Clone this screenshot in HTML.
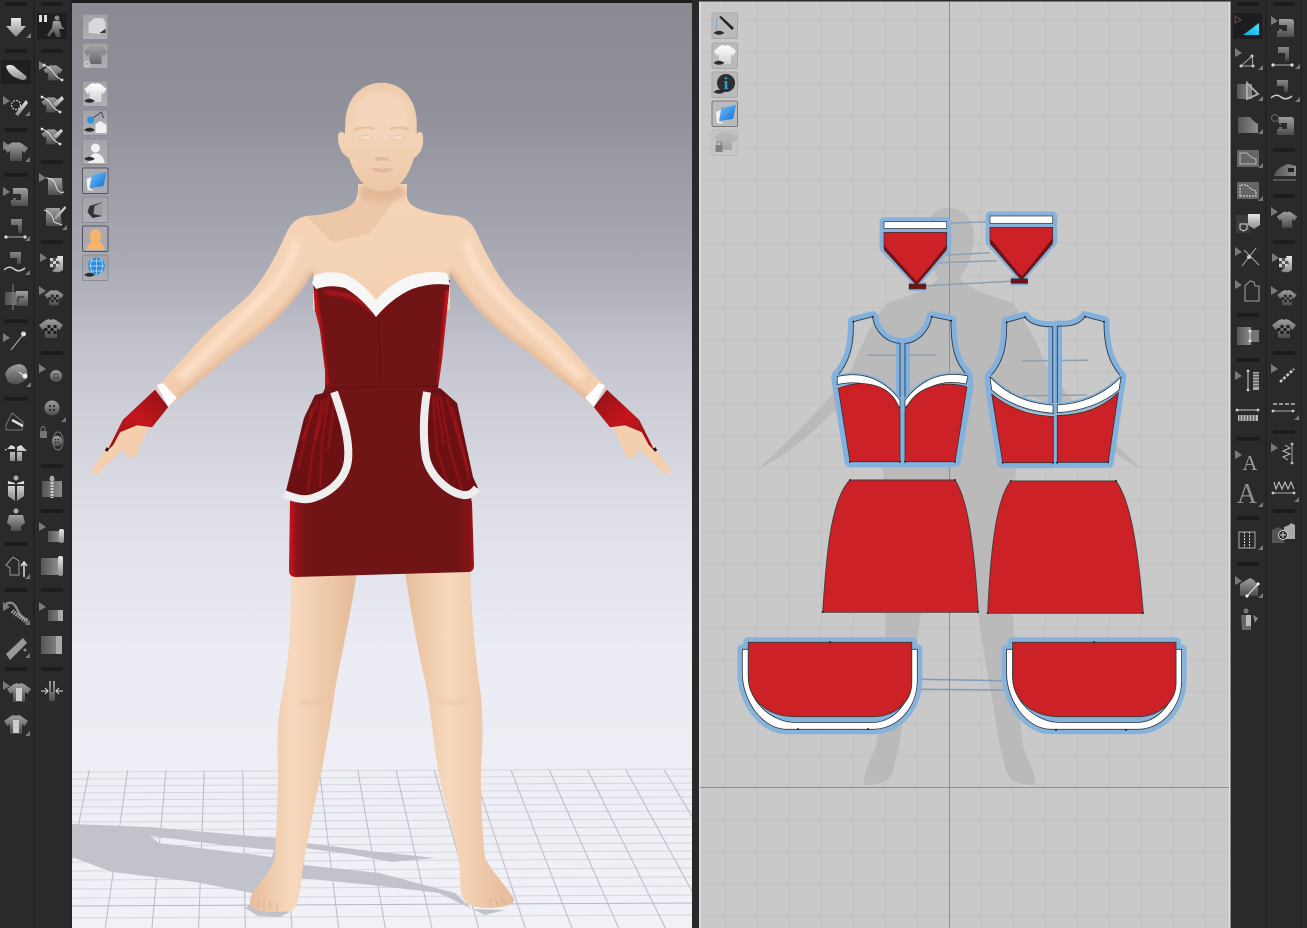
<!DOCTYPE html>
<html><head><meta charset="utf-8"><title>Garment editor</title>
<style>html,body{margin:0;padding:0;background:#2a2a2c;width:1307px;height:928px;overflow:hidden}svg{display:block}</style></head>
<body>
<svg xmlns="http://www.w3.org/2000/svg" width="1307" height="928" viewBox="0 0 1307 928">
<defs>
<linearGradient id="bg3d" x1="0" y1="0" x2="0" y2="928" gradientUnits="userSpaceOnUse">
<stop offset="0" stop-color="#898a92"/><stop offset=".11" stop-color="#8f9099"/><stop offset=".28" stop-color="#a9aab4"/><stop offset=".39" stop-color="#c5c6cf"/><stop offset=".54" stop-color="#dcdde5"/><stop offset=".7" stop-color="#ebebf3"/><stop offset="1" stop-color="#f1f1f8"/></linearGradient>
<linearGradient id="g" x1="0" y1="0" x2="0" y2="1"><stop offset="0" stop-color="#a0a0a0"/><stop offset="1" stop-color="#4c4c4c"/></linearGradient>
<linearGradient id="gh" x1="0" y1="0" x2="1" y2="0"><stop offset="0" stop-color="#555"/><stop offset="1" stop-color="#8c8c8c"/></linearGradient>
<linearGradient id="gw" x1="0" y1="0" x2="0" y2="1"><stop offset="0" stop-color="#e8e8e8"/><stop offset="1" stop-color="#8a8a8a"/></linearGradient>
<linearGradient id="gl" x1="0" y1="0" x2="0" y2="1"><stop offset="0" stop-color="#ffffff"/><stop offset="1" stop-color="#d2d2d2"/></linearGradient>
<linearGradient id="btn" x1="0" y1="0" x2="0" y2="1"><stop offset="0" stop-color="#a2a2a8"/><stop offset="1" stop-color="#aeaeb6"/></linearGradient>
<linearGradient id="cy" x1="0" y1="1" x2="1" y2="0"><stop offset="0" stop-color="#0aa8e0"/><stop offset="1" stop-color="#3fe8ff"/></linearGradient>
<linearGradient id="bl" x1="0" y1="0" x2="1" y2="1"><stop offset="0" stop-color="#74c4f4"/><stop offset="1" stop-color="#0c6cd8"/></linearGradient>
<linearGradient id="skinV" x1="0" y1="0" x2="1" y2="0"><stop offset="0" stop-color="#e6bd9b"/><stop offset=".4" stop-color="#f8d9bd"/><stop offset="1" stop-color="#e4ba98"/></linearGradient>
<linearGradient id="skinB" x1="0" y1="0" x2="0" y2="1"><stop offset="0" stop-color="#f6d5b8"/><stop offset="1" stop-color="#f2cdad"/></linearGradient>
<linearGradient id="head" x1="0" y1="0" x2="0" y2="1"><stop offset="0" stop-color="#edcaab"/><stop offset=".5" stop-color="#f3d3b6"/><stop offset="1" stop-color="#edc8a8"/></linearGradient>
<linearGradient id="dress" x1="0" y1="0" x2="1" y2="0"><stop offset="0" stop-color="#c9171d"/><stop offset=".04" stop-color="#8e1417"/><stop offset=".1" stop-color="#711416"/><stop offset=".92" stop-color="#701416"/><stop offset=".98" stop-color="#8c1316"/><stop offset="1" stop-color="#a81318"/></linearGradient>
<linearGradient id="glove" x1="1" y1="0" x2="0" y2="1"><stop offset="0" stop-color="#8f1216"/><stop offset=".5" stop-color="#c4161c"/><stop offset="1" stop-color="#8f1115"/></linearGradient>
<filter id="b1" x="-20%" y="-20%" width="140%" height="140%"><feGaussianBlur stdDeviation=".8"/></filter>
<filter id="b15" x="-30%" y="-10%" width="160%" height="120%"><feGaussianBlur stdDeviation="1.600"/></filter>
<filter id="b2" x="-30%" y="-30%" width="160%" height="160%"><feGaussianBlur stdDeviation="3"/></filter>
<clipPath id="c3"><rect x="72" y="0" width="620" height="928"/></clipPath>
<clipPath id="c2"><rect x="700" y="2" width="529" height="926"/></clipPath>
<clipPath id="cbody"><path d="M358 184C358 194 358 200 350 206C340 212 322 215 307 216C296 218 290 224 285 236C275 258 262 282 247 297C230 313 212 325 197 343L156 388 170 406C190 388 212 372 232 354C252 340 272 325 288 306C297 296 306 284 313 272L313 310H450V272C457 284 466 296 475 306C491 325 511 340 531 354C551 372 573 388 593 406L606 388 566 343C551 325 533 313 516 297C501 282 488 258 478 236C473 224 467 218 456 216C441 215 423 212 413 206C405 200 407 194 407 184Z"/></clipPath>
<clipPath id="cdress"><path d="M313 280L345 281 376 308 412 282 450 280 447 310 442 360 438 388 460 440 472 503 474 565Q474 572 468 572L296 577Q289 577 289 570L290 500 303 440 325 388 325 370 320 330 315 310Z"/></clipPath>

<path id="pFL" d="M853.300 321.700L872.700 316.700C874 330 886 343 900 343.300V461.700H850L838.300 388 836.700 376.700C850 362 854 345 853.300 321.700Z"/>
<path id="pFR" d="M905 343.300C918 343 930 330 931.700 316.700L951 320.700C951 345 954 362 967 375L968 387 955 461.700H905Z"/>
<path id="pBL" d="M1006.700 322.300L1025 317.300C1030 324 1040 327 1052.700 326.700V462.700H1002.700L991.700 394 990 376.700C1004 362 1007 345 1006.700 322.300Z"/>
<path id="pBR" d="M1057.300 326C1070 327 1080 324 1085 316.700L1104 321.700C1104 345 1108 362 1121 376.700L1118.300 392.700 1108.300 462.300H1057.300Z"/>
<mask id="mh" maskUnits="userSpaceOnUse" x="700" y="200" width="530" height="300">
<rect x="700" y="200" width="530" height="300" fill="#fff"/>
<g fill="#000"><use href="#pFL"/><use href="#pFR"/><use href="#pBL"/><use href="#pBR"/></g>
</mask>

<path id="tee" d="M-5-9-1.500-10Q0-8 1.500-10L5-9 12-4 8.500 1 6-1V9H-6V-1L-8.500 1-12-4Z" fill="url(#g)"/>
<path id="teeL" d="M-5-9-1.500-10Q0-8 1.500-10L5-9 11-4 8 1 6-1V9H-6V-1L-8 1-11-4Z" fill="url(#gl)"/>
<g id="teeC"><use href="#tee"/><path d="M-3-4h3v3h-3zM3-4h3v3h-3zM0-1h3v3h-3zM-6-1h3v3h-3zM-3 2h3v3h-3zM3 2h3v3h-3z" fill="#1c1c1c" transform="translate(-.5 0)"/></g>
<path id="mk" d="M0 0V9L7 5Z" fill="#7a7a80"/>
<path id="cr" d="M0 5H5V0Z" fill="#77777c"/>
<path id="sew" d="M-7-9H5Q8-9 8-6V9H-9V3H-7V1H-4V3H1V-3H-7Z" fill="url(#g)"/>
<g id="sewL"><path d="M-5-11H6V3H2V-5H-5Z" fill="url(#g)" opacity=".8"/><path d="M-10 7H9" stroke="#aaa" stroke-width="1"/><circle cx="-10" cy="7" r="1.600" fill="#ddd"/><circle cx="9" cy="7" r="1.600" fill="#ddd"/></g>
<g id="sewW"><path d="M-5-11H6V1H2V-5H-5Z" fill="url(#g)" opacity=".8"/><path d="M-11 7Q-6 2-1 6T10 5" stroke="#ccc" stroke-width="1.500" fill="none"/></g>
<g id="roll"><rect x="-11" y="-8" width="17" height="17" fill="url(#gh)"/><rect x="6" y="-10" width="5" height="20" rx="2" fill="url(#gw)"/></g>
<g id="rollS"><rect x="-7" y="-4" width="11" height="11" fill="url(#gh)"/><rect x="4" y="-6" width="5" height="14" rx="2" fill="url(#gw)"/></g>
<g id="flat"><rect x="-11" y="-9" width="21" height="18" fill="url(#gh)"/><rect x="4" y="-9" width="6" height="18" fill="#aaa"/></g>
<g id="flatS"><rect x="-7" y="-5" width="15" height="11" fill="url(#gh)"/><rect x="3" y="-5" width="5" height="11" fill="#aaa"/></g>
<g id="curve"><use href="#tee" transform="scale(.8)"/><path d="M-9-8Q-3-6 0-1T9 7" stroke="#ddd" stroke-width="1" fill="none"/><circle cx="-9" cy="-8" r="1.400" fill="#ddd"/><circle cx="9" cy="7" r="1.400" fill="#ddd"/></g>
<g id="btnI"><circle r="7.500" fill="url(#g)"/><g fill="#222"><circle cx="-2" cy="-2" r="1"/><circle cx="2" cy="-2" r="1"/><circle cx="-2" cy="2" r="1"/><circle cx="2" cy="2" r="1"/></g></g>
<path id="sep" d="M-11-1H11M-11 1H11" stroke="#0e0e0e" stroke-width="1"/>
<path id="eye" d="M-5.500 0Q0-4.500 5.500 0Q0 3.500-5.500 0Z" fill="#2c2c2c"/>
<rect id="bt" x="0" y="0" width="25.500" height="25.500" rx="1.500" fill="url(#btn)" stroke="#8b8b90"/>
<rect id="bs" x="0" y="0" width="25.500" height="25.500" rx="1.500" fill="#a9a9b1" stroke="#56565a" stroke-width="1"/>
<rect id="b2d" x="0" y="0" width="25.500" height="25.500" rx="1.500" fill="#bababa" stroke="#a8a8a8"/>
</defs>

<!-- base -->
<rect width="1307" height="928" fill="#29292b"/>
<!-- 3D view -->
<rect x="72" y="3" width="620" height="925" fill="url(#bg3d)"/>
<g clip-path="url(#c3)">
<g stroke="#d5d6df" stroke-width="1">
<path d="M72 772L692 769M72 779L692 776M72 786L692 783M72 793L692 790M72 800L692 797M72 807L692 804M72 814L692 811M72 822L692 819M72 830L692 827M72 838L692 835M72 846L692 843M72 854L692 851M72 862L692 859M72 871L692 868M72 880L692 877M72 889L692 886M72 898L692 895M72 918L692 915"/>
</g>
<path d="M72 906L692 903" stroke="#b5b6c0"/>
<g stroke="#babbc5" stroke-width="1" fill="none">
<path d="M89.300 770L58.600 928M127.700 770L105.300 928M166 770L152 928M204.300 770L198.600 928M242.700 770L245.300 928M281 770L292 928M319.300 770L338.600 928M357.700 770L385.300 928M396 770L432 928M434.300 770L478.600 928M472.700 770L525.300 928M511 770L572 928M549.300 770L618.600 928M587.700 770L665.300 928M626 770L712 928M664.300 770L758.600 928"/>
</g>
<path fill-rule="evenodd" fill="#c2c3ca" d="M72 824L149 827 275 838 305 843 370 851 435 858 392 862 355 855 305 848 304 865 379 873 455 893 472 909 505 910 485 915 470 908 439 893 372 885 299 878 285 885 252 893 195 882 112 872 72 857ZM150 836L159 843 272 857 274 850 222 845 160 837Z"/>
<path fill="#c2c3ca" d="M245 908L252 904 290 912 280 917 258 916Z"/>
</g>

<!-- Figure -->
<g>
<!-- Legs -->
<path fill="url(#skinV)" d="M291 570C291 620 290 660 282 695C277 720 277 745 278 770C278 800 276 835 275 858C272 870 260 882 252 894C248 902 250 908 256 910C266 912 285 913 293 910C299 905 300 890 302 875C304 860 312 815 322 770C326 745 332 715 335 690C340 660 352 610 357 570Z"/>
<path fill="url(#skinV)" d="M405 570C410 610 420 660 427 690C431 715 434 745 438 770C446 810 456 840 459 862C461 875 458 890 464 900C470 908 482 908 492 908C500 907 514 906 514 900C510 890 494 875 485 858C482 830 481 800 481 770C483 745 483 720 481 695C476 665 472 620 470 570Z"/>
<path d="M300 700Q312 708 326 698M436 698Q450 708 468 700" stroke="#e5bb98" stroke-width="5" fill="none" filter="url(#b2)" opacity=".45"/>
<path d="M258 907v-8M264 909v-9M270 910v-9M277 911v-8M498 906l-3-8M505 904l-5-8M491 907l-1-8" stroke="#d7ab88" stroke-width=".8" fill="none"/>
<!-- Torso + arms -->
<path fill="url(#skinB)" d="M358 184C358 194 358 200 350 206C340 212 322 215 307 216C296 218 290 224 285 236C275 258 262 282 247 297C230 313 212 325 197 343L156 388 170 406C190 388 212 372 232 354C252 340 272 325 288 306C297 296 306 284 313 272L313 310H450V272C457 284 466 296 475 306C491 325 511 340 531 354C551 372 573 388 593 406L606 388 566 343C551 325 533 313 516 297C501 282 488 258 478 236C473 224 467 218 456 216C441 215 423 212 413 206C405 200 407 194 407 184Z"/>
<g clip-path="url(#cbody)">
<path d="M170 406C190 388 212 372 232 354C252 340 272 325 288 306C297 296 306 284 313 272M593 406C573 388 551 372 531 354C511 340 491 325 475 306C466 296 457 284 450 272" stroke="#e2b795" stroke-width="7" fill="none" filter="url(#b2)"/>
<path d="M180 378Q230 330 262 298T296 240M583 378Q533 330 501 298T467 240" stroke="#fbe0c7" stroke-width="9" fill="none" filter="url(#b2)"/>
<path fill="#edc8a8" d="M307 217L333 242 340 241 370 233 383 217 400 192 365 195 343 210Z"/>
<ellipse cx="382" cy="192" rx="24" ry="10" fill="#e3b998" filter="url(#b2)"/>
</g>
<!-- hands -->
<g id="armL">
<path fill="#f4cfae" stroke="#f4cfae" stroke-linejoin="round" d="M113 440L91 471 97 474 123 448 128 457 135 457 148 427 130 422Z"/>
<path fill="url(#glove)" stroke="#a01216" stroke-width=".5" stroke-linejoin="round" d="M155 390L168 407 152 427 137 425 120 432 113 445 108 450 123 420Z"/>
<path fill="#fdfdfd" d="M157 385L163 383 177 398 168 407Z"/>
<path d="M108 448l-2 3" stroke="#2a1414" stroke-width="3"/>
</g>
<use href="#armL" transform="translate(762 0) scale(-1 1)"/>
<!-- Head -->
<path fill="url(#head)" d="M381.700 82.700C362 82.700 347 97 345.500 120L345 134C342 131 338 131 338 137C338 145 341 154 349 158C353 172 361 183 369 188C376 192 388 192 395 188C403 183 410 172 414 158C421 154 424 145 423 137C423 131 419 131 416.700 134L416.700 120C415 97 401 82.700 381.700 82.700Z"/>
<ellipse cx="381" cy="115" rx="28" ry="24" fill="#f5d6ba" filter="url(#b2)"/>
<path d="M359 138q7-5 14 0q-7 4-14 0zM391 138q7-5 14 0q-7 4-14 0z" fill="#f4dcc6" stroke="#c7a98e" stroke-width=".6" stroke-dasharray="1 1"/>
<path d="M376 157q-2 3 1 4 5-1 10 0 3-1 1-4" fill="#ddb293" stroke="none" opacity=".7"/>
<path d="M371 169q6-2 11 0q6-2 12 0q-12 7-23 0z" fill="#e2b798"/>
<path d="M354 130q10-5 20-1M390 129q10-4 19 1" stroke="#e0b997" stroke-width="2" fill="none" filter="url(#b1)"/>

<!-- Dress -->
<path fill="url(#dress)" d="M313 280L345 281 376 308 412 282 450 280 447 310 442 360 438 388 460 440 472 503 474 565Q474 572 468 572L296 577Q289 577 289 570L290 500 303 440 325 388 325 370 320 330 315 310Z"/>
<g clip-path="url(#cdress)">
<path d="M314 290L318 320 326 385M448 290L445 330 440 385" stroke="#c9171d" stroke-width="5" fill="none" filter="url(#b15)"/>
<path d="M325 292Q360 295 372 312" stroke="#b0151a" stroke-width="4" fill="none" filter="url(#b15)"/>
<path d="M292 505V572" stroke="#d0181e" stroke-width="5" fill="none" filter="url(#b15)"/>
</g>
<path d="M378 318L381 385M330 388L438 386" stroke="#5d0f11" stroke-width="1" fill="none"/>
<!-- peplum -->
<path fill="#6b1114" d="M335 390L315 395 304 418 285 495 303 503 313 502 337 487 348 460 347 437Z"/>
<path fill="#6b1114" d="M427 391L440 388 457 403 473 477 478 488 463 498 440 483 425 457 424 437Z"/>
<g stroke="#b8161b" fill="none" stroke-width="1.500" filter="url(#b1)" opacity=".75">
<path d="M312 408L298 470M322 400L312 455 308 492M329 396L322 440 320 488M334 402L328 450M318 400L302 440M326 398L316 440"/>
<path d="M440 396L450 450 462 490M433 396L437 450 448 482M447 398L462 450 470 482M452 406L468 470M436 396L444 445"/>
</g>
<g stroke="#eeeeee" fill="none" stroke-width="8" stroke-linejoin="round">
<path d="M334 392C343 418 350 440 348 460C346 478 332 492 313 498C304 501 294 498 284 494"/>
<path d="M427 392C423 415 423 440 426 458C430 475 447 492 463 495C470 496 474 492 477 488"/>
</g>
<!-- neckline -->
<path fill="#f7f7f7" d="M312 283L315 275Q330 270 345 274 362 282 376 300 392 282 412 275 432 270 447 273L450 285Q432 282 412 289 392 298 376 317 362 298 345 288 330 284 316 289Z"/>
</g>

<!-- 3D view buttons -->
<g transform="translate(82.500 14)"><use href="#bt"/>
<path d="M6 19V9L12 4H20L23 8V15L17 20Z" fill="#d8d8d8"/><path d="M6 19H17L23 15V19H6Z" fill="#333"/></g>
<g transform="translate(82.500 43)"><use href="#bt"/><use href="#tee" x="13" y="12" opacity=".7"/><circle cx="5" cy="21" r="2.500" fill="none" stroke="#ddd"/></g>
<g transform="translate(82.500 81)"><use href="#bt"/><use href="#teeL" x="13" y="12"/><use href="#eye" x="7" y="20"/></g>
<g transform="translate(82.500 110)"><use href="#bt"/><path d="M9 9L19 2 21 8" stroke="#444" fill="none"/><circle cx="8" cy="10" r="3.500" fill="#2796e0"/><path d="M13 23V14L18 11 24 15V23Z" fill="#f0f0f0"/><use href="#eye" x="7" y="20"/></g>
<g transform="translate(82.500 139)"><use href="#bt"/><circle cx="13" cy="9" r="4.500" fill="#f2f2f2"/><path d="M6 24Q7 15 13 14 21 15 22 24Z" fill="#f0f0f0"/><use href="#eye" x="7" y="20"/></g>
<g transform="translate(82.500 168)"><use href="#bs"/><path d="M9 7L24 4 21 18 7 20Z" fill="url(#bl)"/><path d="M4 11L9 9 7 20 12 23 5 22Z" fill="#f2f2f2"/></g>
<g transform="translate(82.500 197)"><use href="#bt"/><path d="M7 9L20 5 20 19 10 21 5 15Z" fill="#333"/><path d="M12 9L20 5 20 19 11 17Z" fill="#9c9c9c"/></g>
<g transform="translate(82.500 226)"><use href="#bs"/><ellipse cx="13" cy="10" rx="5.500" ry="7" fill="#f6b36d"/><path d="M4 24Q5 17 10 15H16Q21 17 22 24Z" fill="#f6b36d"/></g>
<g transform="translate(82.500 255)"><use href="#bt"/><circle cx="14" cy="11" r="8.500" fill="#2a8ddf"/><path d="M6 11H22M14 3V19M8 6H20M8 16H20M10 3Q6 11 10 19M18 3Q22 11 18 19" stroke="#c4dcf3" stroke-width=".7" fill="none"/><use href="#eye" x="7" y="20"/></g>

<!-- 2D view -->
<rect x="699" y="1.500" width="531" height="926.500" fill="#c9c9c9"/>
<rect x="699" y="1.500" width="2" height="926.500" fill="#dadada"/>
<rect x="1229" y="1.500" width="1.500" height="926.500" fill="#e2e2e2"/>
<g clip-path="url(#c2)">
<g stroke="#c1c1c1" stroke-width="1"><path d="M725.500 0V928M757.500 0V928M789.500 0V928M821.500 0V928M853.500 0V928M885.500 0V928M917.500 0V928M981.500 0V928M1013.500 0V928M1045.500 0V928M1077.500 0V928M1109.500 0V928M1141.500 0V928M1173.500 0V928M1205.500 0V928"/>
<path d="M700 19.500H1230M700 51.500H1230M700 83.500H1230M700 115.500H1230M700 147.500H1230M700 179.500H1230M700 211.500H1230M700 243.500H1230M700 275.500H1230M700 307.500H1230M700 339.500H1230M700 371.500H1230M700 403.500H1230M700 435.500H1230M700 467.500H1230M700 499.500H1230M700 531.500H1230M700 563.500H1230M700 595.500H1230M700 627.500H1230M700 659.500H1230M700 691.500H1230M700 723.500H1230M700 755.500H1230M700 819.500H1230M700 851.500H1230M700 883.500H1230M700 915.500H1230"/></g>
<!-- silhouette -->
<path fill="#bababa" d="M949 208C934 208 925 220 925 238C926 258 934 270 938 278C930 290 905 297 887 303C872 320 862 345 850 372C830 400 790 440 757 470C795 450 815 430 832 413L870 395C878 400 878 420 880 450C885 480 889 530 887 600C885 660 882 700 876 747C868 765 863 775 864 785C878 785 890 783 893 770L899 747C905 700 918 650 922 600C928 550 940 520 950 500C960 520 972 550 977 600C982 650 993 700 1000 747L1006 770C1010 783 1022 785 1035 785C1036 775 1030 765 1023 747C1018 700 1015 660 1012 600C1010 530 1014 480 1019 450C1022 420 1020 400 1029 395L1067 413C1084 430 1105 450 1143 470C1110 440 1070 400 1050 372C1038 345 1028 325 1013 303C995 297 968 290 960 278C965 270 973 258 974 238C974 220 964 208 949 208Z"/>
<path d="M949.500 0V928" stroke="#8f8f8f"/>
<path d="M700 787.500H1230" stroke="#8f8f8f"/>
<!-- links -->
<g stroke="#8fa0b1" stroke-width="1.500" fill="none">
<path d="M946.700 223.300L990 221.700M946.700 255L990 252.700M938 262.700L996.700 260.700M926 285.700L1011 281.300"/>
<path d="M868 355.300L936 355M1021.700 361L1088.300 360.300M1023 395.700L1087 395"/>
<path d="M917.300 679.300L1006 680.700M917.300 689.300L1006 690" stroke="#7f9cba"/>
</g>

<!-- collar halos -->
<g fill="none" stroke="#86b2dc" stroke-width="9" stroke-linejoin="round">
<path d="M884 221.700H946.700V228.400H884Z"/><path d="M884 232.300H946.700V248L916.700 281.700 884 248Z"/><path d="M909 286.500H926"/>
<path d="M990 216H1052.700V223.300H990Z"/><path d="M990 227.300H1052.700V241.700L1021.700 276.700 990 241.700Z"/><path d="M1011 281H1027.700"/>
</g>
<rect x="884" y="221.700" width="62.700" height="6.700" fill="#fff" stroke="#333" stroke-width=".7"/>
<rect x="990" y="216" width="62.700" height="7.300" fill="#fff" stroke="#333" stroke-width=".7"/>
<path d="M884 232.300H946.700V248L916.700 281.700 884 248Z" fill="#cc2127" stroke="#333" stroke-width=".7"/>
<path d="M884 245L916.700 281.700 946.700 245V250L918 284H915L884 250Z" fill="#6d1618"/>
<rect x="909" y="284" width="17" height="5" fill="#6d1618" stroke="#333" stroke-width=".5"/>
<path d="M990 227.300H1052.700V241.700L1021.700 276.700 990 241.700Z" fill="#cc2127" stroke="#333" stroke-width=".7"/>
<path d="M990 238L1021.700 276.700 1052.700 238V244L1023 279H1020L990 244Z" fill="#6d1618"/>
<rect x="1011" y="278.700" width="16.700" height="4.700" fill="#6d1618" stroke="#333" stroke-width=".5"/>

<!-- bodice halos -->
<g mask="url(#mh)" fill="none" stroke="#82b1de" stroke-width="11" stroke-linejoin="round">
<use href="#pFL"/><use href="#pFR"/><use href="#pBL"/><use href="#pBR"/>
</g>
<rect x="896" y="343" width="14" height="65" fill="#82b1de"/>
<rect x="1048" y="326" width="14" height="80" fill="#82b1de"/>
<!-- bodice front -->
<g fill="none" stroke="#2d3b4b" stroke-width=".9">
<path d="M853.300 321.700L872.700 316.700C874 330 886 343 900 343.300V408M853.300 321.700C854 345 850 362 836.700 376.700"/>
<path d="M905 343.300C918 343 930 330 931.700 316.700L951 320.700C951 345 954 362 967 375M905 343.300V408"/>
</g>
<path d="M837.300 376.500Q875 368 900 400V408Q875 376 837.300 384.500Z" fill="#fff" stroke="#82b1de" stroke-width="4"/>
<path d="M905 400Q930 368 968 376L966 384Q930 376 905 408Z" fill="#fff" stroke="#82b1de" stroke-width="4"/>
<path d="M837.300 376.500Q875 368 900 400V408Q875 376 837.300 384.500Z" fill="#fff" stroke="#333" stroke-width=".8"/>
<path d="M905 400Q930 368 968 376L966 384Q930 376 905 408Z" fill="#fff" stroke="#333" stroke-width=".8"/>
<path d="M838.300 388.300C865 378 893 385 900 410.700V461.700H850Z" fill="#cc2127" stroke="#333" stroke-width=".8"/>
<path d="M905 410.700C915 385 945 380 967 387L955 461.700H905Z" fill="#cc2127" stroke="#333" stroke-width=".8"/>

<!-- bodice back -->
<g fill="none" stroke="#2d3b4b" stroke-width=".9">
<path d="M1006.700 322.300L1025 317.300C1030 324 1040 327 1052.700 326.700V404M1006.700 322.300C1007 345 1004 362 990 376.700"/>
<path d="M1057.300 326C1070 327 1080 324 1085 316.700L1104 321.700C1104 345 1108 362 1121 376.700M1057.300 326V404"/>
</g>
<path d="M990 377Q1015 403 1053 405V413.300Q1015 410 991.700 390Z" fill="#fff" stroke="#82b1de" stroke-width="4"/>
<path d="M1121 377Q1095 403 1057.300 405V412.700Q1095 410 1119 390Z" fill="#fff" stroke="#82b1de" stroke-width="4"/>
<path d="M990 377Q1015 403 1053 405V413.300Q1015 410 991.700 390Z" fill="#fff" stroke="#333" stroke-width=".8"/>
<path d="M1121 377Q1095 403 1057.300 405V412.700Q1095 410 1119 390Z" fill="#fff" stroke="#333" stroke-width=".8"/>
<path d="M991.700 394Q1017 415 1053.300 416.500V462.700H1002.700Z" fill="#cc2127" stroke="#333" stroke-width=".8"/>
<path d="M1057.300 415.500Q1095 415 1118.300 392.700L1108.300 462.300H1057.300Z" fill="#cc2127" stroke="#333" stroke-width=".8"/>

<!-- skirts -->
<path d="M850 480H955C967 498 974 540 978.300 612.300H822.700C826 560 830 500 850 480Z" fill="#cc2127" stroke="#4a3a3a" stroke-width=".9"/>
<path d="M1010.700 481H1116C1130 500 1138 545 1143.300 613.300H987.700C990 560 995 500 1010.700 481Z" fill="#cc2127" stroke="#4a3a3a" stroke-width=".9"/>

<!-- pockets -->
<g id="pk">
<path d="M748.300 642.300H911.700V649.300H917.300V680C917.300 708 897 729.300 873.300 729.300H786.700C762 729.300 742.300 700 742.300 673.300V649.300H748.300Z" fill="#86b2dc" stroke="#86b2dc" stroke-width="10" stroke-linejoin="round"/>
<path d="M742.300 649.300H748.300V676.700C748.300 700 770 722 795 722.500H873C895 722 911 700 911.700 680V649.300H917.300V680C917.300 708 897 729.300 873.300 729.300H786.700C762 729.300 742.300 700 742.300 673.300Z" fill="#fff" stroke="#2b3642" stroke-width=".8"/>
<path d="M748.300 642.300H911.700V683.300C911.700 703 893 716.700 873.300 716.700H795C768 716.700 748.300 700 748.300 676.700Z" fill="#cc2127" stroke="#3a3a3a" stroke-width=".9"/>
</g>
<use href="#pk" x="264.300"/>

<!-- vertices -->
<g fill="#222">
<circle cx="850" cy="480" r="1"/><circle cx="955" cy="480" r="1"/><circle cx="822.700" cy="612" r="1"/><circle cx="978" cy="612" r="1"/>
<circle cx="1010.700" cy="481" r="1"/><circle cx="1116" cy="481" r="1"/><circle cx="987.700" cy="613" r="1"/><circle cx="1143" cy="613" r="1"/>
<circle cx="830" cy="642" r="1"/><circle cx="1094" cy="642" r="1"/><circle cx="798" cy="729" r="1"/><circle cx="868" cy="729" r="1"/><circle cx="1056" cy="730" r="1"/><circle cx="1126" cy="730" r="1"/>
<circle cx="853.300" cy="321.700" r="1"/><circle cx="872.700" cy="316.700" r="1"/><circle cx="931.700" cy="316.700" r="1"/><circle cx="951" cy="320.700" r="1"/><circle cx="1006.700" cy="322.300" r="1"/><circle cx="1025" cy="317.300" r="1"/><circle cx="1085" cy="316.700" r="1"/><circle cx="1104" cy="321.700" r="1"/>
<circle cx="850" cy="461.700" r="1"/><circle cx="900" cy="461.700" r="1"/><circle cx="905" cy="461.700" r="1"/><circle cx="955" cy="461.700" r="1"/><circle cx="1002.700" cy="462.700" r="1"/><circle cx="1053" cy="462.700" r="1"/><circle cx="1057" cy="462.700" r="1"/><circle cx="1108" cy="462.300" r="1"/>
</g>
</g>

<!-- 2D buttons -->
<g transform="translate(712 13)"><use href="#b2d"/><path d="M7 4L20 17 22 15 9 3Z" fill="#222"/><path d="M5 5 4 17" stroke="#7ea0c8" fill="none"/><use href="#eye" x="7" y="20"/></g>
<g transform="translate(712 43)"><use href="#b2d"/><use href="#teeL" x="13" y="12"/><use href="#eye" x="7" y="20"/></g>
<g transform="translate(712 72)"><use href="#b2d"/><circle cx="14" cy="11" r="9" fill="#2f2f33"/><text x="14" y="17" font-family="'Liberation Serif',serif" font-weight="bold" font-size="17" fill="#1fa6d8" text-anchor="middle">i</text><use href="#eye" x="7" y="20"/></g>
<g transform="translate(712 101)"><rect width="25.500" height="25.500" rx="1.500" fill="#bababa" stroke="#7a7a7a"/><path d="M9 7L24 4 21 18 7 20Z" fill="url(#bl)"/><path d="M4 11L9 9 7 20 12 23 5 22Z" fill="#f2f2f2"/></g>
<g transform="translate(712 130)"><rect width="25.500" height="25.500" rx="1.500" fill="#c6c6c6" stroke="#b9b9b9"/><use href="#tee" x="14" y="11" opacity=".25"/><rect x="3.500" y="15" width="7" height="7" fill="#808080"/><path d="M5 15v-3h4v3" stroke="#808080" fill="none"/></g>

<!-- Left toolbar -->
<rect x="0" y="0" width="72" height="928" fill="#2a2a2c"/>
<rect x="33.500" y="0" width="1" height="928" fill="#1c1c1e"/>
<rect x="69" y="0" width="3" height="928" fill="#262628"/>
<rect x="72" y="0" width="620" height="3" fill="#1e1e20"/>
<g>
<use href="#sep" x="16" y="4"/><use href="#sep" x="16" y="51"/><use href="#sep" x="16" y="130"/><use href="#sep" x="16" y="175"/><use href="#sep" x="16" y="321"/><use href="#sep" x="16" y="399"/><use href="#sep" x="16" y="544"/><use href="#sep" x="16" y="590"/><use href="#sep" x="16" y="669"/>
<use href="#sep" x="52" y="4"/><use href="#sep" x="52" y="51"/><use href="#sep" x="52" y="162"/><use href="#sep" x="52" y="242"/><use href="#sep" x="52" y="353"/><use href="#sep" x="52" y="466"/><use href="#sep" x="52" y="511"/><use href="#sep" x="52" y="590"/><use href="#sep" x="52" y="669"/>

<!-- col1 -->
<path d="M11 18H21V26H26L16 37 6 26H11Z" fill="url(#gw)"/><use href="#cr" x="26" y="33"/>
<rect x="1" y="60" width="30" height="24" rx="1" fill="#1f1f21"/>
<path d="M6 66Q12 63 16 68L26 76Q28 80 22 80L14 77Q7 72 6 66Z" fill="url(#gw)"/>
<use href="#mk" x="3" y="96"/><circle cx="16" cy="105" r="4.500" fill="none" stroke="#ddd" stroke-dasharray="2 1"/><path d="M15 114 26 100 28 103 18 116Z" fill="url(#gw)"/><use href="#cr" x="25" y="111"/>
<use href="#mk" x="3" y="141"/><use href="#tee" x="16" y="152"/><use href="#cr" x="25" y="157"/>
<use href="#mk" x="3" y="187"/><use href="#sew" x="20" y="197"/>
<use href="#sewL" x="16" y="230"/><use href="#cr" x="25" y="236"/>
<use href="#sewW" x="15" y="263"/><use href="#cr" x="25" y="270"/>
<path d="M13 284V310" stroke="#666" stroke-width="1.500"/><path d="M5 292H20V305H5Z" fill="url(#gh)" opacity=".9"/><path d="M16 291H28V306H16Z" fill="url(#g)"/><path d="M18 302V297H24" stroke="#222" fill="none"/>
<use href="#mk" x="3" y="333"/><path d="M11 350 22 336" stroke="#bbb"/><circle cx="23.500" cy="334" r="2.500" fill="#ddd"/>
<path d="M5 374Q8 365 20 364 29 366 27 378 18 388 8 382Z" fill="url(#g)"/><path d="M19 372 27 378" stroke="#eee" stroke-width="1"/><circle cx="25" cy="376" r="2.500" fill="#eee"/><use href="#cr" x="26" y="382"/>
<path d="M6 425 12 413 23 422 22 430H6Z" fill="none" stroke="#777"/><path d="M12 420 23 426" stroke="#ddd" stroke-width="2.500"/>
<path d="M5 451 11 445 15 447V449H5ZM17 447 21 445 27 451H17ZM10 452H15V461H10ZM17 452H22V461H17Z" fill="url(#gw)"/>
<path d="M8 481V496L15 501V483ZM24 481V496L17 501V483Z" fill="url(#gw)"/><circle cx="16" cy="478" r="2.500" fill="#aaa"/><path d="M7 485H25" stroke="#333" stroke-width="2"/>
<circle cx="16" cy="511" r="2.500" fill="#aaa"/><path d="M9 515H23L25 523 21 526V531H11V526L7 523Z" fill="url(#g)"/>
<path d="M6 565 13 557 19 561V575H10V568Z" fill="none" stroke="#999" stroke-width="1"/><path d="M24 577V563M21 566L24 562 27 566" stroke="#ddd" stroke-width="1.500" fill="none"/><use href="#cr" x="25" y="574"/>
<use href="#mk" x="3" y="602"/><path d="M6 604Q13 600 17 609T28 620" stroke="#888" stroke-width="2.500" fill="none"/><path d="M12 611 27 622" stroke="#aaa" stroke-width="4" stroke-dasharray="1.500 1"/><use href="#cr" x="25" y="620"/>
<path d="M6 654 23 638 27 643 10 660Z" fill="#999"/><circle cx="25" cy="650" r="1.500" fill="#888"/><use href="#cr" x="25" y="653"/>
<use href="#mk" x="3" y="681"/><use href="#tee" x="19" y="693"/><rect x="16" y="688" width="6" height="13" fill="#ccc"/>
<use href="#tee" x="16" y="725"/><rect x="13" y="720" width="6" height="13" fill="#ccc"/><use href="#cr" x="25" y="731"/>

<!-- col2 -->
<rect x="37" y="13" width="30" height="26" fill="#1f1f21"/>
<path d="M39 15h3v7h-3zM44 15h3v7h-3z" fill="#ddd"/><circle cx="57" cy="18" r="2.500" fill="#888"/><path d="M53 21H60L62 27 65 29 59 29 61 37H56L54 31 49 37 47 35 52 28Z" fill="url(#g)"/>
<use href="#mk" x="39" y="61"/><use href="#curve" x="53" y="73"/>
<use href="#curve" x="51" y="105"/><path d="M53 104 62 96 64 99 56 107Z" fill="url(#gw)"/>
<use href="#curve" x="51" y="137"/><path d="M53 136 61 129 63 131 56 139Z" fill="url(#gw)"/>
<use href="#mk" x="39" y="173"/><path d="M48 178H62L63 195H48Z" fill="url(#g)"/><path d="M46 178Q54 178 56 186T64 192" stroke="#ddd" fill="none"/>
<path d="M46 208H60L62 226H46Z" fill="url(#g)"/><path d="M44 210Q52 212 54 222L62 225" stroke="#ddd" fill="none"/><path d="M54 218 65 206 66 208 56 220Z" fill="url(#gw)"/><use href="#cr" x="62" y="225"/>
<use href="#mk" x="40" y="253"/><rect x="50" y="258" width="11" height="10" fill="#555"/><path d="M50 258h3v3h-3zM56 258h3v3h-3zM53 261h3v3h-3zM50 264h3v3h-3zM56 264h3v3h-3z" fill="#ccc"/><path d="M57 256H63V270Q58 274 52 271L60 264Z" fill="url(#gw)"/>
<use href="#mk" x="39" y="286"/><use href="#teeC" transform="translate(54 298) scale(.8)"/>
<use href="#teeC" transform="translate(51 329)"/>
<use href="#mk" x="39" y="364"/><use href="#btnI" transform="translate(56 376) scale(.8)"/>
<use href="#btnI" x="52" y="408"/><use href="#cr" x="61" y="417"/>
<rect x="40" y="431" width="7" height="7" rx="1" fill="#777"/><path d="M41 431v-3q2-3 4 0v3" stroke="#777" fill="none"/><use href="#btnI" transform="translate(57 441) scale(.7)"/><ellipse cx="58" cy="441" rx="5" ry="9" fill="none" stroke="#777"/>
<rect x="42" y="481" width="20" height="16" fill="url(#gh)"/><path d="M52 476V498" stroke="#ccc" stroke-width="3" stroke-dasharray="2 1"/><circle cx="52" cy="479" r="2.500" fill="#aaa"/>
<use href="#mk" x="39" y="522"/><use href="#rollS" x="55" y="535"/>
<use href="#roll" x="52" y="566"/>
<use href="#mk" x="39" y="602"/><use href="#flatS" x="55" y="615"/>
<use href="#flat" x="52" y="645"/>
<path d="M49 681V700Q52 703 55 700V681H53V692H51V681Z" fill="url(#g)"/><path d="M41 691H47M45 688 48 691 45 694M63 691H57M59 688 56 691 59 694" stroke="#ddd" fill="none"/>
</g>

<!-- Right toolbar -->
<rect x="1230.500" y="0" width="76.500" height="928" fill="#2a2a2c"/>
<rect x="1265.500" y="0" width="1" height="928" fill="#1c1c1e"/>
<rect x="1301" y="0" width="1" height="928" fill="#222224"/>
<g>
<use href="#sep" x="1248" y="4"/><use href="#sep" x="1248" y="315"/><use href="#sep" x="1248" y="360"/><use href="#sep" x="1248" y="439"/><use href="#sep" x="1248" y="518"/><use href="#sep" x="1248" y="564"/>
<use href="#sep" x="1284" y="4"/><use href="#sep" x="1284" y="150"/><use href="#sep" x="1284" y="196"/><use href="#sep" x="1284" y="242"/><use href="#sep" x="1284" y="353"/><use href="#sep" x="1284" y="432"/><use href="#sep" x="1284" y="511"/>

<rect x="1233" y="13" width="29" height="26" fill="#1d1d1f"/>
<path d="M1235 16V23L1241 20Z" fill="none" stroke="#6a4a55"/>
<path d="M1243 35H1259V23Z" fill="url(#cy)"/>
<use href="#mk" x="1235" y="48"/><path d="M1241 66H1253L1252 56Z" fill="none" stroke="#aaa"/><g fill="#ccc"><circle cx="1241" cy="66" r="1.500"/><circle cx="1253" cy="66" r="1.500"/><circle cx="1252" cy="56" r="1.500"/></g><use href="#cr" x="1258" y="65"/>
<rect x="1237" y="84" width="15" height="15" fill="url(#gh)"/><path d="M1247 83 1258 94 1247 99Z" fill="none" stroke="#aaa" stroke-width="2"/><use href="#cr" x="1258" y="96"/>
<path d="M1238 117H1250Q1254 122 1258 124V133H1238Z" fill="url(#gh)"/><use href="#cr" x="1258" y="129"/>
<rect x="1237" y="150" width="22" height="17" fill="#666"/><path d="M1240 164V153H1247Q1251 158 1256 159V164Z" fill="none" stroke="#bbb"/><use href="#cr" x="1258" y="163"/>
<rect x="1237" y="182" width="22" height="17" fill="#666"/><path d="M1240 196V185H1247Q1251 190 1256 191V196Z" fill="none" stroke="#ddd" stroke-dasharray="2 1"/><use href="#cr" x="1258" y="196"/>
<rect x="1236" y="215" width="14" height="18" fill="#3a3a3a"/><path d="M1248 214H1260V225L1254 229 1248 225Z" fill="url(#gw)"/><path d="M1240 224H1247V229L1243.500 231 1240 229Z" fill="none" stroke="#ddd"/>
<use href="#mk" x="1235" y="247"/><path d="M1242 266 1256 248M1244 250 1259 265" stroke="#aaa"/><circle cx="1249" cy="257" r="2" fill="#ccc"/>
<use href="#mk" x="1235" y="280"/><path d="M1245 301V286L1250 281 1254 282 1255 286H1259V301Z" fill="none" stroke="#888" stroke-width="1.300"/>
<rect x="1237" y="327" width="14" height="18" fill="url(#gh)"/><rect x="1251" y="330" width="8" height="12" fill="#777"/><path d="M1250 331V340" stroke="#ccc"/><circle cx="1250" cy="331" r="1.500" fill="#ddd"/><circle cx="1250" cy="341" r="1.500" fill="#ddd"/>
<use href="#mk" x="1235" y="371"/><path d="M1248 371V390" stroke="#ccc"/><circle cx="1248" cy="371" r="1.400" fill="#ccc"/><circle cx="1248" cy="390" r="1.400" fill="#ccc"/><rect x="1253" y="372" width="6" height="18" fill="#aaa"/><path d="M1253 374H1259M1253 377H1259M1253 380H1259M1253 383H1259M1253 386H1259" stroke="#333"/>
<path d="M1237 410H1258" stroke="#ccc"/><circle cx="1237" cy="410" r="1.400" fill="#ccc"/><circle cx="1258" cy="410" r="1.400" fill="#ccc"/><rect x="1238" y="415" width="20" height="6" fill="#bbb"/><path d="M1240 415V421M1243 415V421M1246 415V421M1249 415V421M1252 415V421M1255 415V421" stroke="#333"/>
<use href="#mk" x="1235" y="450"/><text x="1250" y="470" font-family="'Liberation Serif',serif" font-size="21" fill="#9a9a9a" text-anchor="middle">A</text>
<text x="1247" y="503" font-family="'Liberation Serif',serif" font-size="28" fill="#8e8e8e" text-anchor="middle">A</text><use href="#cr" x="1258" y="502"/>
<rect x="1239" y="532" width="16" height="16" fill="none" stroke="#aaa"/><path d="M1244.500 532V548M1249.500 532V548" stroke="#ccc" stroke-dasharray="2 1"/><use href="#cr" x="1258" y="545"/>
<use href="#mk" x="1235" y="576"/><path d="M1240 596V584L1250 578 1254 580 1258 586V596Z" fill="url(#g)"/><path d="M1247 596 1258 584" stroke="#eee"/><circle cx="1247" cy="596" r="1.600" fill="#eee"/><circle cx="1258" cy="584" r="1.600" fill="#eee"/><use href="#cr" x="1258" y="593"/>
<circle cx="1246" cy="611" r="2.500" fill="#777"/><path d="M1241 615H1251V630H1242Z" fill="#666"/><path d="M1246 615H1251V626H1246Z" fill="#bbb"/><path d="M1253 615l5 3-3 5z" fill="#888"/>

<use href="#mk" x="1271" y="16"/><use href="#sew" x="1286" y="28"/>
<use href="#sewL" x="1283" y="58"/><use href="#cr" x="1295" y="64"/>
<use href="#sewW" x="1282" y="91"/><use href="#cr" x="1295" y="97"/>
<circle cx="1275" cy="118" r="3.500" fill="none" stroke="#666"/><path d="M1278 121 1281 125" stroke="#666"/><use href="#sew" x="1286" y="126"/>
<path d="M1274 176Q1276 168 1288 164L1296 166V176Z" fill="url(#gh)"/><path d="M1273 180H1296" stroke="#555" stroke-width="2"/><path d="M1288 168H1294V172H1288Z" fill="#222"/>
<use href="#mk" x="1271" y="207"/><use href="#tee" transform="translate(1287 220) scale(.85)"/>
<use href="#mk" x="1272" y="253"/><rect x="1279" y="258" width="11" height="10" fill="#555"/><path d="M1279 258h3v3h-3zM1285 258h3v3h-3zM1282 261h3v3h-3zM1279 264h3v3h-3zM1285 264h3v3h-3z" fill="#ccc"/><path d="M1286 256H1292V270Q1287 274 1281 271L1289 264Z" fill="url(#gw)"/>
<use href="#mk" x="1271" y="286"/><use href="#teeC" transform="translate(1287 298) scale(.8)"/>
<use href="#teeC" transform="translate(1284 329)"/>
<use href="#mk" x="1271" y="364"/><path d="M1280 382 1294 369" stroke="#ccc" stroke-width="2.500" stroke-dasharray="3 1.500"/>
<path d="M1273 404H1296" stroke="#999" stroke-width="2" stroke-dasharray="4 2"/><path d="M1273 411H1293" stroke="#aaa"/><circle cx="1273" cy="411" r="1.400" fill="#ccc"/><circle cx="1293" cy="411" r="1.400" fill="#ccc"/><use href="#cr" x="1294" y="415"/>
<use href="#mk" x="1271" y="443"/><path d="M1285 445 1290 448 1283 451 1290 454 1283 457 1288 460" stroke="#bbb" fill="none"/><path d="M1292 444V463" stroke="#aaa"/><circle cx="1292" cy="444" r="1.400" fill="#bbb"/><circle cx="1292" cy="463" r="1.400" fill="#bbb"/>
<path d="M1274 482L1276 489 1279 482 1282 489 1285 482 1288 489 1291 482 1294 489" stroke="#ccc" fill="none"/><path d="M1273 493H1294" stroke="#aaa"/><circle cx="1273" cy="493" r="1.400" fill="#ccc"/><circle cx="1294" cy="493" r="1.400" fill="#ccc"/><use href="#cr" x="1294" y="497"/>
<path d="M1272 543V530L1278 527 1284 530V543Z" fill="#555"/><path d="M1284 539V527L1289 525 1291 523 1295 525V539Z" fill="#aaa"/><circle cx="1283" cy="535" r="4.500" fill="#2a2a2c" stroke="#ccc"/><path d="M1280 535H1286M1283 532V538" stroke="#ddd"/>
</g>
</svg>
</body></html>
